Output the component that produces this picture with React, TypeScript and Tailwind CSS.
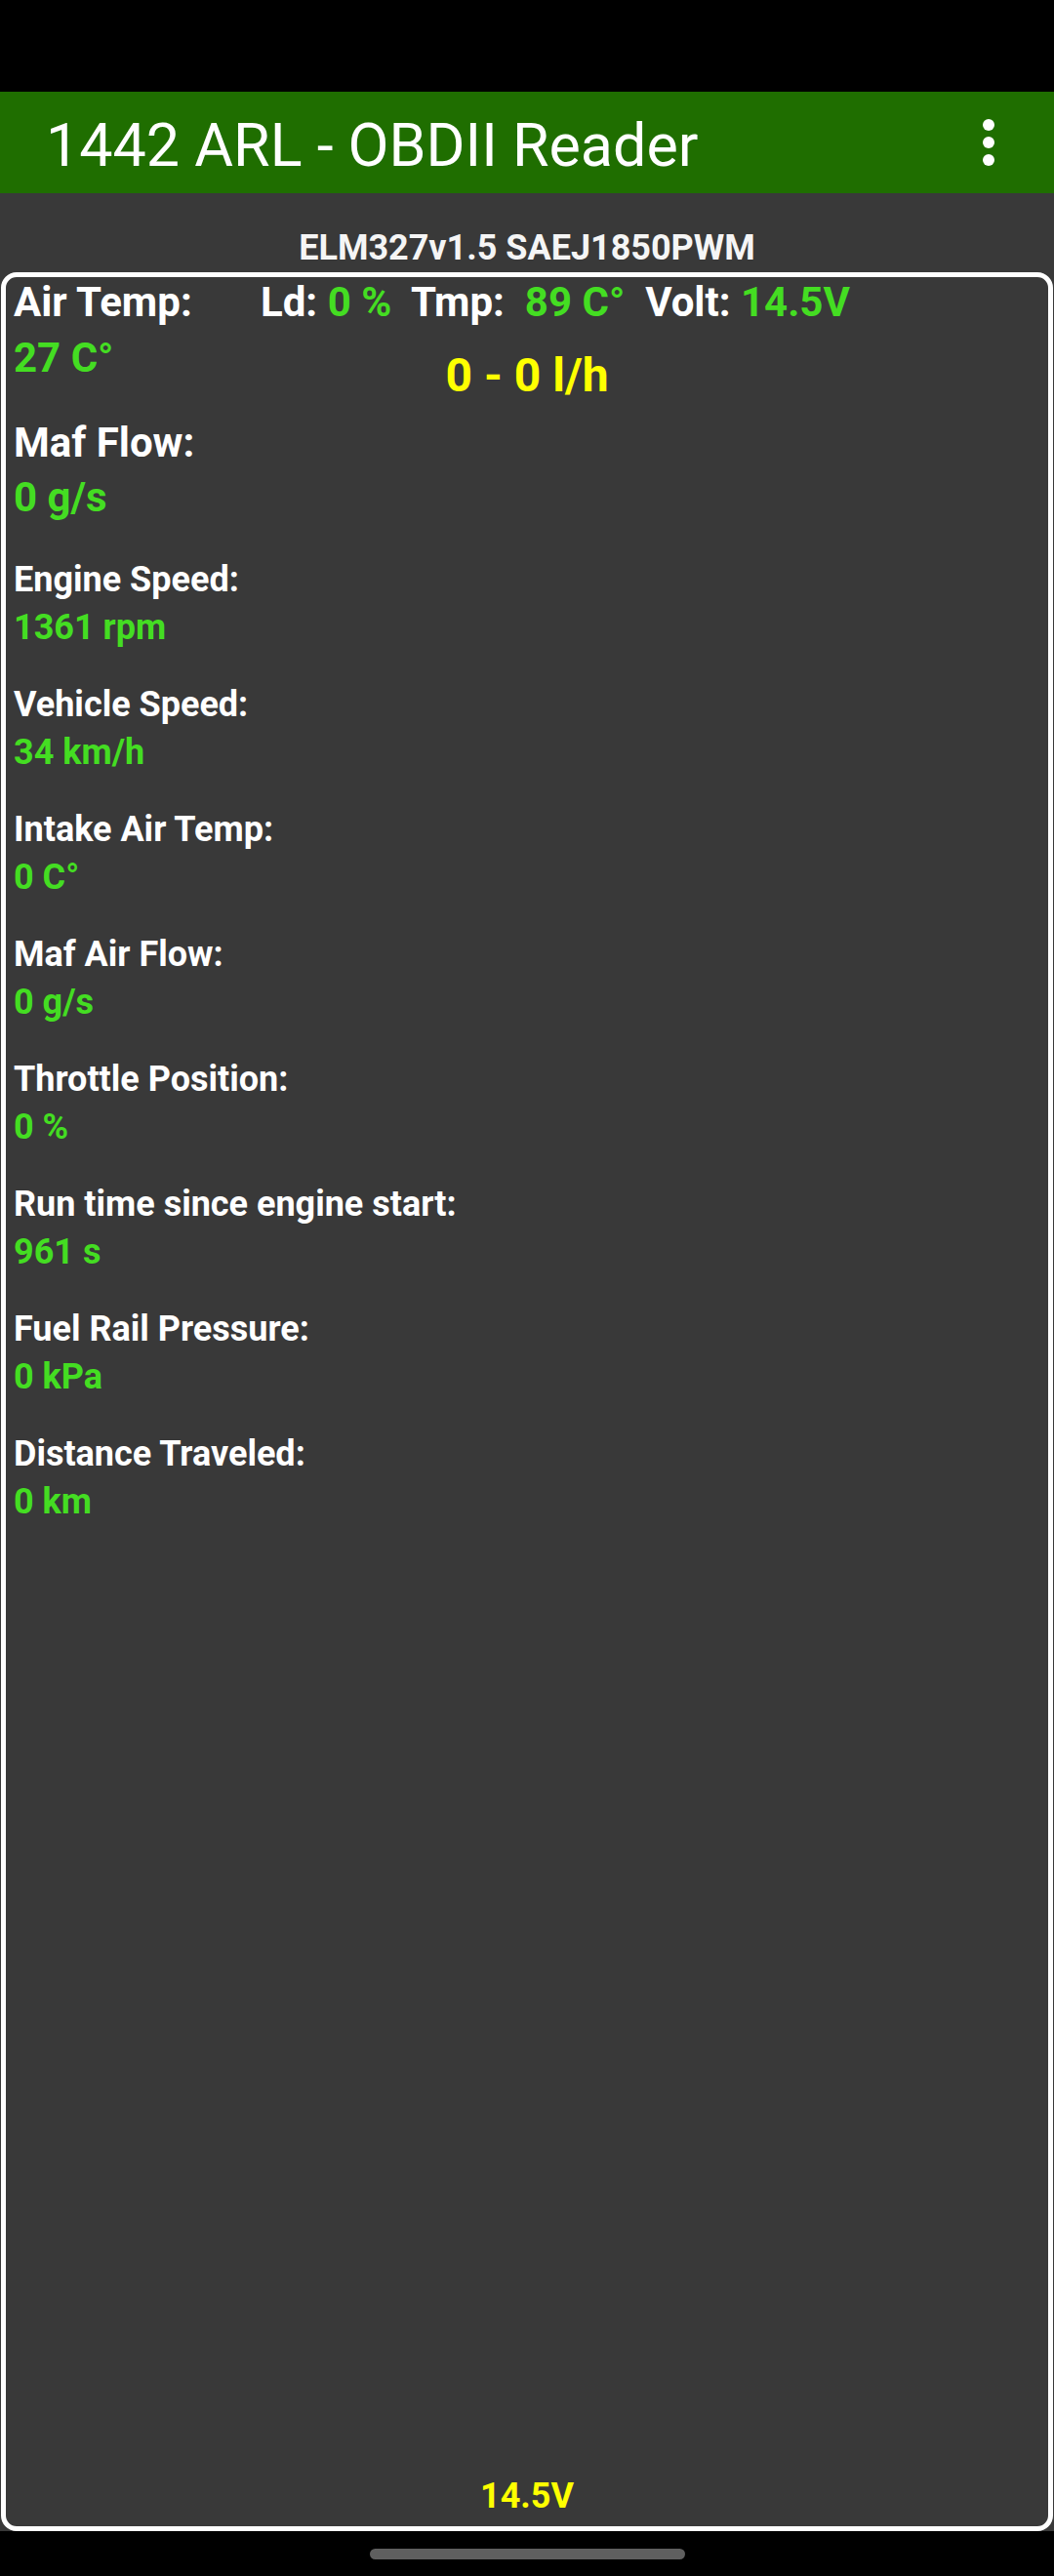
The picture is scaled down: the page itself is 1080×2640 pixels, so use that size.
const readings = [
  { label: "Engine Speed:", value: "1361 rpm" },
  { label: "Vehicle Speed:", value: "34 km/h" },
  { label: "Intake Air Temp:", value: "0 C°" },
  { label: "Maf Air Flow:", value: "0 g/s" },
  { label: "Throttle Position:", value: "0 %" },
  { label: "Run time since engine start:", value: "961 s" },
  { label: "Fuel Rail Pressure:", value: "0 kPa" },
  { label: "Distance Traveled:", value: "0 km" },
];

const App = () => {
  return (
    <div className="w-[1080px] h-[2640px] bg-black flex flex-col font-['Roboto',sans-serif] text-white">
      {/* status bar */}
      <div className="h-[94px] shrink-0 bg-black" />

      {/* toolbar */}
      <header className="h-[104px] shrink-0 bg-[#1f6e00] flex items-center justify-between pl-[47px] pr-[61px]">
        <h1 className="text-[61px] leading-[70px] font-normal pt-[6px]">1442 ARL - OBDII Reader</h1>
        <svg width="12" height="48" viewBox="0 0 12 48" fill="white" aria-label="Menu">
          <circle cx="6" cy="6" r="6" />
          <circle cx="6" cy="24" r="6" />
          <circle cx="6" cy="42" r="6" />
        </svg>
      </header>

      <main className="flex-1 bg-[#393939] flex flex-col">
        <div className="h-[81px] shrink-0 pt-[35px] text-center text-[36px] leading-[42px] font-bold text-[#f5f5f5]">
          ELM327v1.5 SAEJ1850PWM
        </div>

        <div className="flex-1 mx-[1px] border-[5px] border-white rounded-[16px] flex flex-col px-[8px] font-bold">
          {/* top summary */}
          <div className="flex text-[42px] leading-[52px]">
            <span className="w-[253px] shrink-0">Air Temp:</span>
            <span className="whitespace-pre">
              Ld: <span className="text-[#44dd22]">0 %</span>  Tmp:  <span className="text-[#44dd22]">89 C°</span>  Volt: <span className="text-[#44dd22]">14.5V</span>
            </span>
          </div>
          <div className="grid grid-cols-[1fr_auto_1fr] mt-[5px]">
            <span className="text-[42px] leading-[52px] text-[#44dd22]">27 C°</span>
            <span className="pt-[18px] text-[48px] leading-[52px] text-[#ffff00]">0 - 0 l/h</span>
            <span />
          </div>
          <div className="mt-[17px] text-[42px] leading-[52px]">Maf Flow:</div>
          <div className="mt-[4px] text-[42px] leading-[52px] text-[#44dd22]">0 g/s</div>

          {/* readings */}
          <div className="mt-[34px] flex flex-col gap-[30px]">
            {readings.map((r) => (
              <div key={r.label} className="text-[36px] leading-[49px]">
                <div>{r.label}</div>
                <div className="text-[#44dd22]">{r.value}</div>
              </div>
            ))}
          </div>

          <div className="mt-auto pb-[9px] text-center text-[36px] leading-[44px] text-[#ffff00]">14.5V</div>
        </div>
      </main>

      {/* nav bar */}
      <div className="h-[46px] shrink-0 bg-black flex justify-center pt-[18px]">
        <div className="w-[323px] h-[11px] rounded-full bg-[#5f5f5f]" />
      </div>
    </div>
  );
};

export default App;
